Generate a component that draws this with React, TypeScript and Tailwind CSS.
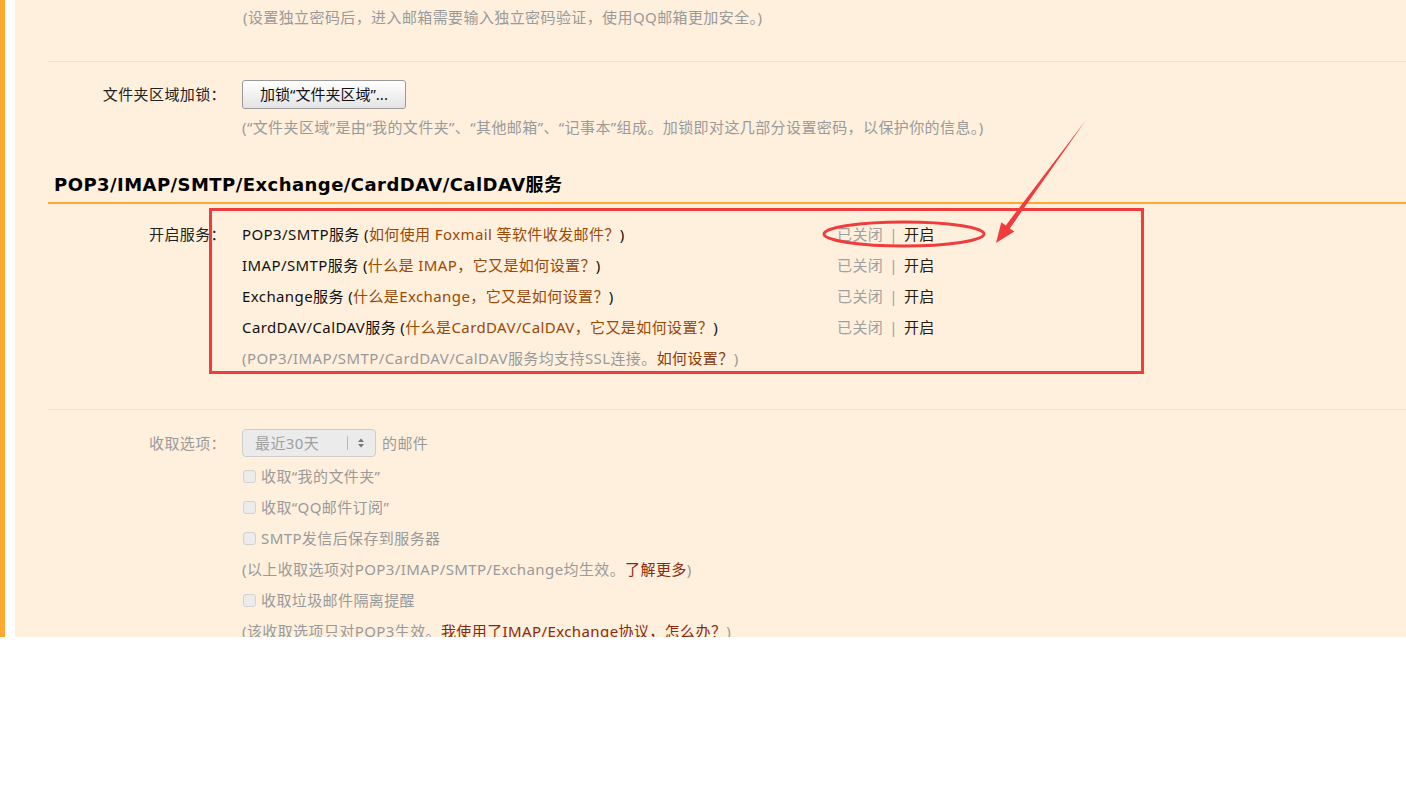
import React from "react";

const font = { fontFamily: '"Noto Sans", "Noto Sans CJK SC", sans-serif' };
const headFont = { fontFamily: '"DejaVu Sans", "Noto Sans CJK SC", sans-serif' };

const services = [
  { name: "POP3/SMTP服务", link: "如何使用 Foxmail 等软件收发邮件？" },
  { name: "IMAP/SMTP服务", link: "什么是 IMAP，它又是如何设置？" },
  { name: "Exchange服务", link: "什么是Exchange，它又是如何设置？" },
  { name: "CardDAV/CalDAV服务", link: "什么是CardDAV/CalDAV，它又是如何设置？" },
];

const Label = ({ children, gray }: { children: React.ReactNode; gray?: boolean }) => (
  <div className={`w-[194px] shrink-0 text-right pr-[16px] ${gray ? "text-[#9a9a9a]" : "text-[#222]"}`}>
    {children}
  </div>
);

const Checkbox = ({ text }: { text: string }) => (
  <div className="flex items-center h-[31px]">
    <span className="w-[13px] h-[13px] ml-px rounded-[3px] border border-[#d2d2d2] bg-[#ececec]" />
    <span className="ml-[5px] text-[#9a9a9a]">{text}</span>
  </div>
);

export default function App() {
  return (
    <div className="w-[1406px] h-[794px] bg-white flex items-start overflow-hidden text-[15px] tracking-[0.4px]" style={font}>
      <div className="w-[5px] h-[637px] bg-[#ffa930]" />
      <div className="w-[10px]" />
      <main className="relative flex-1 h-[637px] bg-[#fef0dd] overflow-hidden pl-[33px]">
        {/* 独立密码 hint */}
        <div className="pl-[195px] mt-[2px] h-[31px] leading-[31px] text-[#9a9a9a]">
          (设置独立密码后，进入邮箱需要输入独立密码验证，使用QQ邮箱更加安全。)
        </div>
        <div className="mt-[28px] h-px bg-[#fbe0bd]" />

        {/* 文件夹区域加锁 */}
        <div className="mt-[18px] flex items-center h-[29px]">
          <Label>文件夹区域加锁：</Label>
          <button className="w-[164px] h-[29px] rounded-[3px] border border-[#9a9a9a] bg-gradient-to-b from-white to-[#e4e4e4] text-[#111] leading-none tracking-normal">
            加锁“文件夹区域”...
          </button>
        </div>
        <div className="pl-[194px] mt-[3px] h-[31px] leading-[31px] text-[#9a9a9a]">
          (“文件夹区域”是由“我的文件夹”、“其他邮箱”、“记事本”组成。加锁即对这几部分设置密码，以保护你的信息。)
        </div>

        {/* heading */}
        <div className="mt-[30px] pl-[6px] pb-[5px] border-b-2 border-[#ffa72f]">
          <h2 className="text-[18px] leading-[24px] font-bold text-black tracking-[0.45px]" style={headFont}>
            POP3/IMAP/SMTP/Exchange/CardDAV/CalDAV服务
          </h2>
        </div>

        {/* services */}
        <div className="mt-[15px] flex">
          <Label>
            <div className="h-[31px] leading-[31px]">开启服务：</div>
          </Label>
          <div className="flex flex-col">
            {services.map((s) => (
              <div key={s.name} className="flex h-[31px] leading-[31px]">
                <div className="w-[595px] text-[#111]">
                  {s.name} (<span className="text-[#9a4806]">{s.link}</span>)
                </div>
                <div className="text-[#a0a0a0]">
                  已关闭<span className="ml-[6px] mr-[6px]">|</span>
                  <span className="text-[#2a1a0a]">开启</span>
                </div>
              </div>
            ))}
            <div className="h-[31px] leading-[31px] text-[#9a9a9a]">
              (POP3/IMAP/SMTP/CardDAV/CalDAV服务均支持SSL连接。<span className="text-[#8a3a0a]">如何设置？</span>)
            </div>
          </div>
        </div>

        <div className="mt-[35px] h-px bg-[#fbe0bd]" />

        {/* 收取选项 */}
        <div className="mt-[19px] flex items-center h-[28px]">
          <Label gray>收取选项：</Label>
          <div className="w-[134px] h-[28px] rounded-[4px] border border-[#cdcdcd] bg-[#ebebeb] flex items-center">
            <span className="pl-[12px] w-[104px] text-[#a0a0a0]">最近30天</span>
            <span className="w-px h-[14px] bg-[#b8b8b8]" />
            <svg width="27" height="14" viewBox="0 0 27 14">
              <path d="M10 6 L13 2.5 L16 6 Z" fill="#777" />
              <path d="M10 8 L13 11.5 L16 8 Z" fill="#777" />
            </svg>
          </div>
          <span className="ml-[6px] text-[#9a9a9a]">的邮件</span>
        </div>
        <div className="mt-[4px] pl-[194px]">
          <Checkbox text="收取“我的文件夹”" />
          <Checkbox text="收取“QQ邮件订阅”" />
          <Checkbox text="SMTP发信后保存到服务器" />
          <div className="h-[31px] leading-[31px] text-[#9a9a9a]">
            (以上收取选项对POP3/IMAP/SMTP/Exchange均生效。<span className="text-[#8a2a0a]">了解更多</span>)
          </div>
          <Checkbox text="收取垃圾邮件隔离提醒" />
          <div className="h-[31px] leading-[31px] text-[#9a9a9a]">
            (该收取选项只对POP3生效。<span className="text-[#8a2a0a]">我使用了IMAP/Exchange协议，怎么办？</span>)
          </div>
        </div>

        {/* annotations drawn over the page */}
        <div className="absolute left-[194px] top-[208px] w-[935px] h-[166px] border-[3px] border-[#f03c3c]" />
        <svg className="absolute left-0 top-0 pointer-events-none" width="1391" height="637" viewBox="15 0 1391 637">
          <ellipse cx="904" cy="234" rx="80" ry="12" fill="none" stroke="#f03c3c" strokeWidth="3" />
          <polygon
            points="1086,120 1009.8,228.4 1014.3,231.6 996,243 1001.3,222.2 1005.8,225.4"
            fill="#f03c3c"
          />
        </svg>
      </main>
    </div>
  );
}
